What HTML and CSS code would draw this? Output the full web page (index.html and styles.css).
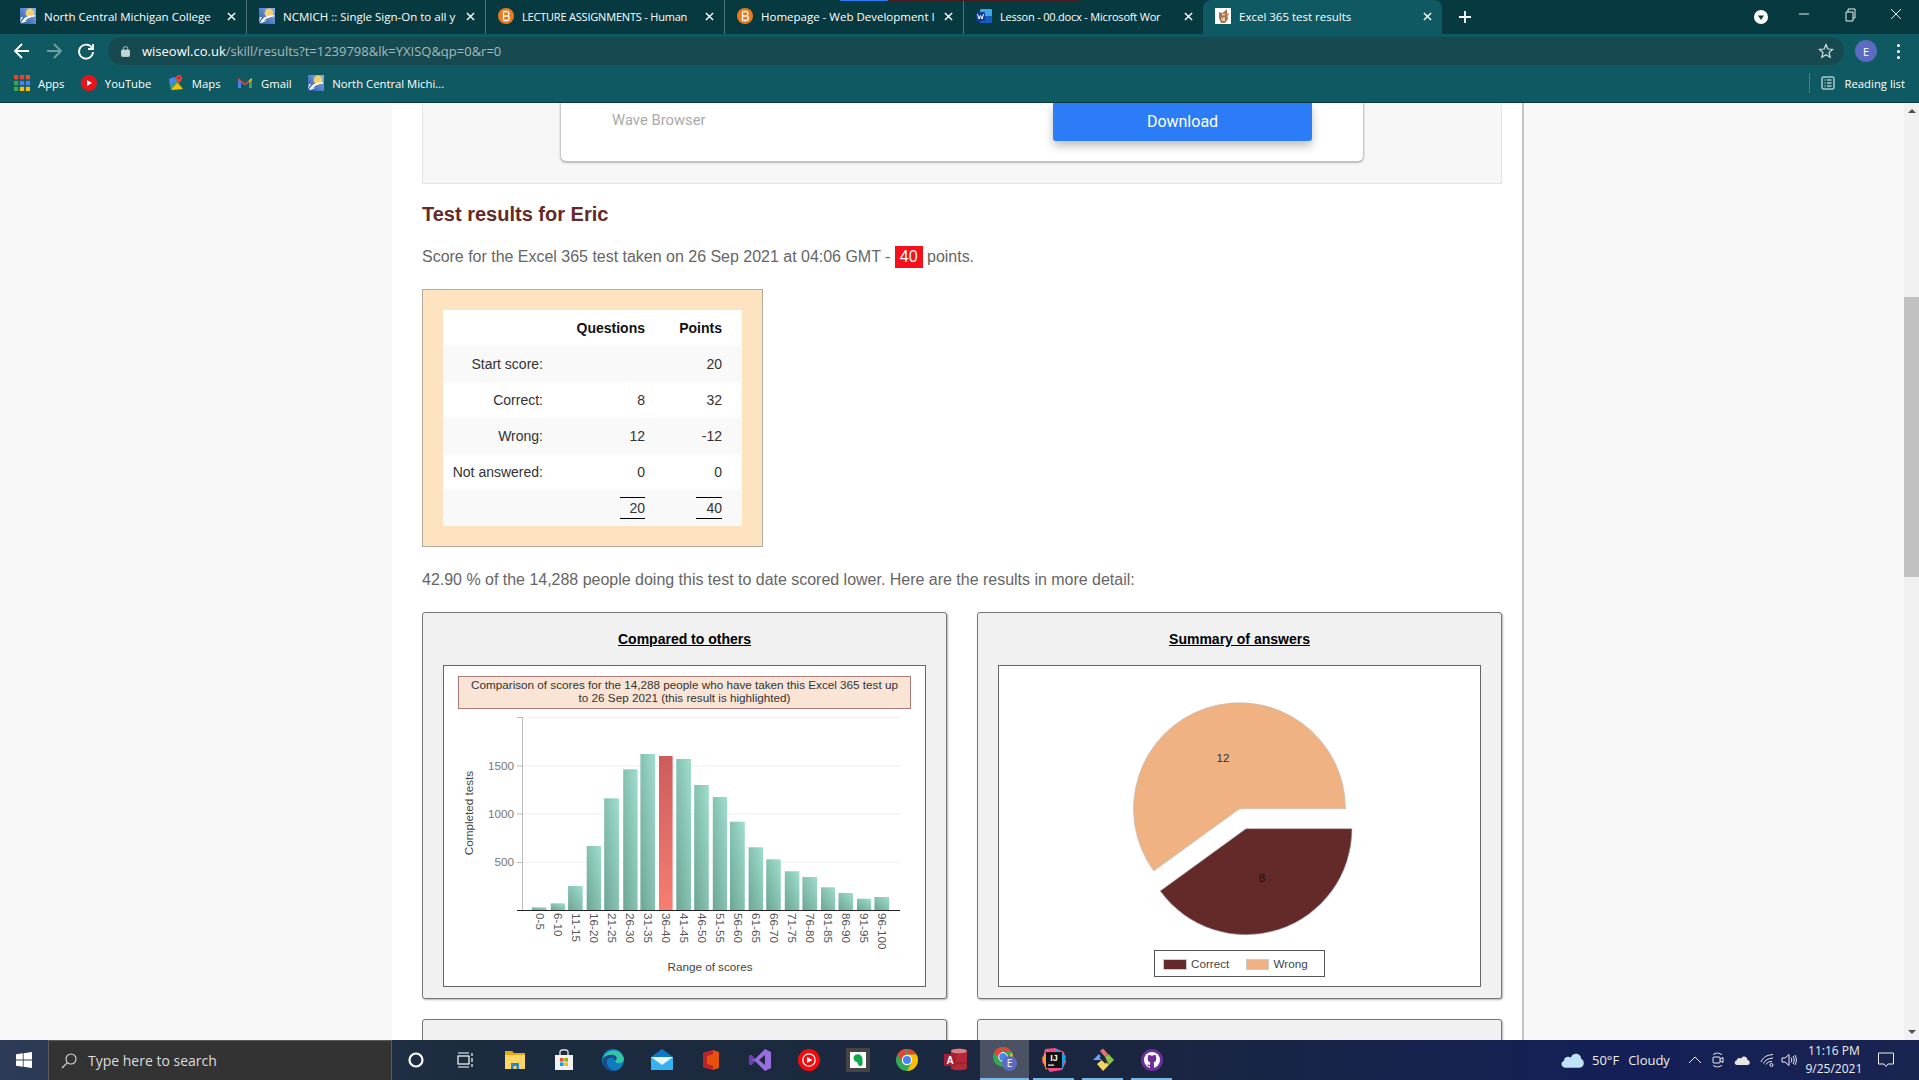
FILE: index.html
```html
<!DOCTYPE html>
<html lang="en">
<head>
    <meta charset="UTF-8">
    <meta name="viewport" content="width=device-width, initial-scale=1.0">
    <title>Excel 365 test results</title>
    <link rel="stylesheet" href="styles.css">
</head>
<body>
    <svg class="icon-defs" width="0" height="0">
        <defs>
            <linearGradient id="barGreen" x1="1" y1="0" x2="0" y2="1">
                <stop offset="0" stop-color="#a0decf"/>
                <stop offset="1" stop-color="#6ca595"/>
            </linearGradient>
            <linearGradient id="barRed" x1="0" y1="0" x2="0" y2="1">
                <stop offset="0" stop-color="#cd5c5c"/>
                <stop offset="1" stop-color="#f67e72"/>
            </linearGradient>
            <linearGradient id="ncBlue" x1="1" y1="0" x2="0" y2="1">
                <stop offset="0" stop-color="#8fb4e4"/>
                <stop offset="1" stop-color="#2456ad"/>
            </linearGradient>
            <symbol id="ncLogo" viewBox="0 0 16 16">
                <rect width="16" height="16" fill="url(#ncBlue)"/>
                <circle cx="10" cy="5" r="4.4" fill="#f8cf6e"/>
                <path d="M1 15 C3 10 7 7.5 15 7 V8.5 C10 9 7 10.5 5 13 L8 12.5 C5 14 3 15 1 15 Z" fill="#fff"/>
                <path d="M0 14 L3 9 L1 9 Z" fill="#fff"/>
            </symbol>
            <symbol id="bongo" viewBox="0 0 16 16">
                <circle cx="8" cy="8" r="8" fill="#e97c1f"/>
                <path d="M5.5 3.5 H9 C11.5 3.5 11.5 7.6 9.4 7.9 C12 8.2 12 12.5 9 12.5 H5.5 M5.5 3.5 V12.5 M6 8 H9" fill="none" stroke="#fff" stroke-width="1.3"/>
            </symbol>
        </defs>
    </svg>

    <div class="browser-top">
        <div class="load-line"></div>
        <div class="tab-strip">
            <div class="tab">
                <svg class="favicon"><use href="#ncLogo"/></svg>
                <span class="tab-title">North Central Michigan College</span>
                <svg class="tab-close" viewBox="0 0 10 10"><path d="M1 1 L9 9 M9 1 L1 9"/></svg>
            </div>
            <div class="tab">
                <svg class="favicon"><use href="#ncLogo"/></svg>
                <span class="tab-title">NCMICH :: Single Sign-On to all y</span>
                <svg class="tab-close" viewBox="0 0 10 10"><path d="M1 1 L9 9 M9 1 L1 9"/></svg>
            </div>
            <div class="tab">
                <svg class="favicon"><use href="#bongo"/></svg>
                <span class="tab-title tab-title-small">LECTURE ASSIGNMENTS - Human</span>
                <svg class="tab-close" viewBox="0 0 10 10"><path d="M1 1 L9 9 M9 1 L1 9"/></svg>
            </div>
            <div class="tab">
                <svg class="favicon"><use href="#bongo"/></svg>
                <span class="tab-title">Homepage - Web Development I</span>
                <svg class="tab-close" viewBox="0 0 10 10"><path d="M1 1 L9 9 M9 1 L1 9"/></svg>
            </div>
            <div class="tab tab-last">
                <svg class="favicon" viewBox="0 0 16 16">
                    <rect x="4" y="1" width="12" height="14" rx="1" fill="#41a5ee"/>
                    <rect x="4" y="8" width="12" height="7" fill="#185abd"/>
                    <rect x="0" y="4" width="9" height="9" rx="1" fill="#103f91"/>
                    <path d="M1.5 6 L3 11 L4.5 7.5 L6 11 L7.5 6" fill="none" stroke="#fff" stroke-width="1"/>
                </svg>
                <span class="tab-title tab-title-small">Lesson - 00.docx - Microsoft Wor</span>
                <svg class="tab-close" viewBox="0 0 10 10"><path d="M1 1 L9 9 M9 1 L1 9"/></svg>
            </div>
            <div class="tab tab-active">
                <svg class="favicon" viewBox="0 0 16 16">
                    <rect width="16" height="16" fill="#fff"/>
                    <path d="M4 4 L7 5 L10 3 L12 1 L12 6 L13 11 L10 15 L6 15 L4 10 Z" fill="#a5734f"/>
                    <path d="M7 5.5 H10 V7.5 H7 Z M6 10 L10 9 L10 13 L7 13 Z" fill="#e2c7a5"/>
                    <path d="M10 6 L14 5 L13 8 Z" fill="#d9803a"/>
                </svg>
                <span class="tab-title">Excel 365 test results</span>
                <svg class="tab-close" viewBox="0 0 10 10"><path d="M1 1 L9 9 M9 1 L1 9"/></svg>
            </div>
            <svg class="new-tab" viewBox="0 0 12 12"><path d="M6 0 V12 M0 6 H12"/></svg>
            <div class="window-controls">
                <svg class="tab-search" viewBox="0 0 14 14"><circle cx="7" cy="7" r="7" fill="#fff"/><path d="M4 5.5 H10 L7 10 Z" fill="#063a40"/></svg>
                <svg class="win-btn" viewBox="0 0 46 34"><path d="M18 14 H28"/></svg>
                <svg class="win-btn" viewBox="0 0 46 34"><path d="M19 12 H26 V21 H19 Z M21 12 V9 H28 V18 H26"/></svg>
                <svg class="win-btn" viewBox="0 0 46 34"><path d="M18 9 L28 19 M28 9 L18 19"/></svg>
            </div>
        </div>

        <div class="toolbar">
            <svg class="nav-btn" viewBox="0 0 32 32"><path d="M23 16 H10 M16 9 L9 16 L16 23"/></svg>
            <svg class="nav-btn nav-off" viewBox="0 0 32 32"><path d="M9 16 H22 M16 9 L23 16 L16 23"/></svg>
            <svg class="nav-btn" viewBox="0 0 32 32"><path d="M22 13 A7 7 0 1 0 23 17 M23 9 V14 H18"/></svg>
            <div class="url-bar">
                <svg class="lock" viewBox="0 0 10 12"><rect x="0.5" y="5" width="9" height="7" rx="1"/><path d="M2.5 5 V3.5 A2.5 2.5 0 0 1 7.5 3.5 V5" fill="none"/></svg>
                <span class="url-text"><span class="url-host">wiseowl.co.uk</span>/skill/results?t=1239798&amp;lk=YXISQ&amp;qp=0&amp;r=0</span>
                <svg class="star" viewBox="0 0 16 16"><path d="M8 1.5 L9.9 6 L14.7 6.4 L11 9.5 L12.2 14.2 L8 11.7 L3.8 14.2 L5 9.5 L1.3 6.4 L6.1 6 Z"/></svg>
            </div>
            <div class="avatar">E</div>
            <div class="menu-dots"><i></i><i></i><i></i></div>
        </div>

        <div class="bookmarks">
            <a class="bookmark">
                <svg class="bm-icon" viewBox="0 0 15 15">
                    <rect width="4" height="4" fill="#ea4335"/>
                    <rect x="5.5" width="4" height="4" fill="#ea4335"/>
                    <rect x="11" width="4" height="4" fill="#e8502e"/>
                    <rect y="5.5" width="4" height="4" fill="#34a853"/>
                    <rect x="5.5" y="5.5" width="4" height="4" fill="#4285f4"/>
                    <rect x="11" y="5.5" width="4" height="4" fill="#4285f4"/>
                    <rect y="11" width="4" height="4" fill="#34a853"/>
                    <rect x="5.5" y="11" width="4" height="4" fill="#fbbc05"/>
                    <rect x="11" y="11" width="4" height="4" fill="#fbbc05"/>
                </svg>Apps</a>
            <a class="bookmark">
                <svg class="bm-icon" viewBox="0 0 16 16"><circle cx="8" cy="8" r="8" fill="#e8141c"/><path d="M6 5 L11 8 L6 11 Z" fill="#fff"/></svg>YouTube</a>
            <a class="bookmark">
                <svg class="bm-icon" viewBox="0 0 16 16">
                    <path d="M1 4 L7 2 L15 14 L3 15 Z" fill="#34a853"/>
                    <path d="M3 15 L9 8 L15 14 Z" fill="#fbbc05"/>
                    <path d="M1 4 L7 2 L9 6 L2 11 Z" fill="#4285f4"/>
                    <path d="M11 0 C8 0 7.5 3 8.5 5 L11 9 L13.5 5 C14.5 3 14 0 11 0 Z" fill="#ea4335"/>
                    <circle cx="11" cy="3" r="1" fill="#8c1c13"/>
                </svg>Maps</a>
            <a class="bookmark">
                <svg class="bm-icon" viewBox="0 0 16 16">
                    <path d="M1 3 L8 8.5 L15 3 V13 H12 V7.5 L8 10.5 L4 7.5 V13 H1 Z" fill="#ea4335"/>
                    <path d="M1 5 V13 H4 V7.5 Z" fill="#4285f4"/>
                    <path d="M15 5 V13 H12 V7.5 Z" fill="#34a853"/>
                    <path d="M12 5 L15 3 V5 L12 7.5 Z" fill="#fbbc05"/>
                </svg>Gmail</a>
            <a class="bookmark">
                <svg class="bm-icon"><use href="#ncLogo"/></svg>North Central Michi...</a>
            <div class="reading-list">
                <svg class="bm-icon" viewBox="0 0 16 16"><rect x="2" y="2" width="12" height="12" rx="1"/><path d="M4.5 5 H5.5 M7 5 H11.5 M4.5 8 H5.5 M7 8 H11.5 M4.5 11 H5.5 M7 11 H11.5"/></svg>
                Reading list
            </div>
        </div>
    </div>

    <main class="viewport">
        <div class="gutter"></div>
        <div class="content">
            <div class="ad-box">
                <div class="ad-card">
                    <span class="ad-name">Wave Browser</span>
                    <a class="ad-button">Download</a>
                </div>
            </div>

            <h2 class="results-title">Test results for Eric</h2>
            <p class="score-line">Score for the Excel 365 test taken on 26 Sep 2021 at 04:06 GMT - <span class="score-badge">40</span> points.</p>

            <div class="score-box">
                <table class="score-table">
                    <tr><th></th><th>Questions</th><th>Points</th></tr>
                    <tr><td>Start score:</td><td></td><td>20</td></tr>
                    <tr><td>Correct:</td><td>8</td><td>32</td></tr>
                    <tr><td>Wrong:</td><td>12</td><td>-12</td></tr>
                    <tr><td>Not answered:</td><td>0</td><td>0</td></tr>
                    <tr><td></td><td><span class="total">20</span></td><td><span class="total total-wide">40</span></td></tr>
                </table>
            </div>

            <p class="compare-line">42.90 % of the 14,288 people doing this test to date scored lower. Here are the results in more detail:</p>

            <div class="panels">
                <section class="panel">
                    <h3 class="panel-title">Compared to others</h3>
                    <div class="chart-box">
                        <svg class="chart" viewBox="444 666 481 320">
                            <rect class="caption-box" x="458.5" y="676.5" width="452" height="32"/>
                            <text class="caption" x="684.5" y="688.5">Comparison of scores for the 14,288 people who have taken this Excel 365 test up</text>
                            <text class="caption" x="684.5" y="702">to 26 Sep 2021 (this result is highlighted)</text>

                            <path class="grid" d="M522 717.5 H900 M522 766 H900 M522 814 H900 M522 862.5 H900"/>
                            <path class="axis-y" d="M522.5 717 V910 M517 717.5 H522 M517 766 H522 M517 814 H522 M517 862.5 H522"/>
                            <text class="y-label" x="514" y="770">1500</text>
                            <text class="y-label" x="514" y="818">1000</text>
                            <text class="y-label" x="514" y="866">500</text>
                            <text class="axis-title" transform="rotate(-90 473 813)" x="473" y="813">Completed tests</text>

                            <g class="bars">
                                <rect x="531.9" y="907.3" width="14.6" height="2.7"/>
                                <rect x="550.8" y="903.3" width="14.4" height="6.7"/>
                                <rect x="568.1" y="886" width="14.6" height="24"/>
                                <rect x="586.7" y="846" width="14.4" height="64"/>
                                <rect x="604.2" y="798.3" width="14.8" height="111.7"/>
                                <rect x="623.2" y="769.3" width="14.4" height="140.7"/>
                                <rect x="640.4" y="754" width="14.6" height="156"/>
                                <rect class="bar-hit" x="659" y="756" width="13.6" height="154"/>
                                <rect x="676.3" y="759" width="14.8" height="151"/>
                                <rect x="694.2" y="785" width="14.6" height="125"/>
                                <rect x="712.8" y="797" width="14.2" height="113"/>
                                <rect x="730" y="821.7" width="14.8" height="88.3"/>
                                <rect x="748.6" y="847.3" width="14.6" height="62.7"/>
                                <rect x="766.2" y="859.3" width="14.6" height="50.7"/>
                                <rect x="784.8" y="871.3" width="14.6" height="38.7"/>
                                <rect x="802.4" y="877" width="14.8" height="33"/>
                                <rect x="821" y="887.3" width="14.2" height="22.7"/>
                                <rect x="838.5" y="893" width="14.6" height="17"/>
                                <rect x="857" y="898.7" width="14.2" height="11.3"/>
                                <rect x="874.4" y="897" width="14.8" height="13"/>
                            </g>
                            <path class="axis-x" d="M517 910.5 H900"/>

                            <g class="x-labels">
                                <text transform="rotate(90 535.5 913)" x="535.5" y="913">0-5</text>
                                <text transform="rotate(90 554 913)" x="554" y="913">6-10</text>
                                <text transform="rotate(90 572 913)" x="572" y="913">11-15</text>
                                <text transform="rotate(90 590 913)" x="590" y="913">16-20</text>
                                <text transform="rotate(90 608 913)" x="608" y="913">21-25</text>
                                <text transform="rotate(90 626 913)" x="626" y="913">26-30</text>
                                <text transform="rotate(90 644 913)" x="644" y="913">31-35</text>
                                <text transform="rotate(90 662 913)" x="662" y="913">36-40</text>
                                <text transform="rotate(90 680 913)" x="680" y="913">41-45</text>
                                <text transform="rotate(90 698 913)" x="698" y="913">46-50</text>
                                <text transform="rotate(90 716 913)" x="716" y="913">51-55</text>
                                <text transform="rotate(90 734 913)" x="734" y="913">56-60</text>
                                <text transform="rotate(90 752 913)" x="752" y="913">61-65</text>
                                <text transform="rotate(90 770 913)" x="770" y="913">66-70</text>
                                <text transform="rotate(90 788 913)" x="788" y="913">71-75</text>
                                <text transform="rotate(90 806 913)" x="806" y="913">76-80</text>
                                <text transform="rotate(90 824 913)" x="824" y="913">81-85</text>
                                <text transform="rotate(90 842 913)" x="842" y="913">86-90</text>
                                <text transform="rotate(90 860 913)" x="860" y="913">91-95</text>
                                <text transform="rotate(90 878 913)" x="878" y="913">96-100</text>
                            </g>
                            <text class="axis-title" x="710" y="971">Range of scores</text>
                        </svg>
                    </div>
                </section>

                <section class="panel">
                    <h3 class="panel-title">Summary of answers</h3>
                    <div class="chart-box">
                        <svg class="chart" viewBox="999 666 481 320">
                            <path class="slice-wrong" d="M1239.5 808.7 H1345.5 A106 106 0 1 0 1153.7 871 Z"/>
                            <path class="slice-correct" d="M1246 828.7 H1352 A106 106 0 0 1 1160.2 891 Z"/>
                            <text class="pie-label" x="1223" y="762">12</text>
                            <text class="pie-label pie-label-dark" x="1262" y="882">8</text>
                            <rect class="legend-box" x="1154.5" y="950.5" width="170" height="26"/>
                            <rect class="swatch-correct" x="1163.5" y="959.5" width="23" height="10"/>
                            <text class="legend-text" x="1191" y="967.5">Correct</text>
                            <rect class="swatch-wrong" x="1246.5" y="959.5" width="22" height="10"/>
                            <text class="legend-text" x="1273.5" y="967.5">Wrong</text>
                        </svg>
                    </div>
                </section>

                <section class="panel panel-next"></section>
                <section class="panel panel-next"></section>
            </div>
        </div>
        <div class="side"></div>
        <div class="scrollbar">
            <span class="arrow-up"></span>
            <div class="scroll-track"><div class="scroll-thumb"></div></div>
            <span class="arrow-down"></span>
        </div>
    </main>

    <footer class="taskbar">
        <div class="start">
            <svg class="start-logo" viewBox="0 0 16 16"><path d="M0 2.3 L6.8 1.3 V7.6 H0 Z M7.6 1.2 L16 0 V7.6 H7.6 Z M0 8.4 H6.8 V14.7 L0 13.7 Z M7.6 8.4 H16 V16 L7.6 14.8 Z"/></svg>
        </div>
        <div class="search-box">
            <svg class="search-icon" viewBox="0 0 16 16"><circle cx="10" cy="6" r="5"/><path d="M6.4 9.6 L1 15"/></svg>
            <span>Type here to search</span>
        </div>

        <div class="task-icons">
            <div class="task"><svg viewBox="0 0 24 24"><circle cx="12" cy="12" r="6.5" fill="none" stroke="#fff" stroke-width="2.2"/></svg></div>
            <div class="task task-view"><svg viewBox="0 0 24 24" fill="none" stroke="#fff" stroke-width="1.2"><rect x="5" y="8" width="11" height="8"/><path d="M5 5 H16 M5 19 H16 M19 5 V8 M19 10 V14 M19 16 V19"/></svg></div>
            <div class="task"><svg viewBox="0 0 24 24"><path d="M2 3 H9 L11 5 H22 V21 H2 Z" fill="#e6a817"/><path d="M2 7 H22 V21 H2 Z" fill="#fcd667"/><path d="M8 21 V15 H16 V21 H13.5 V18 H10.5 V21 Z" fill="#2d86c6"/></svg></div>
            <div class="task"><svg viewBox="0 0 24 24"><path d="M3 7 H21 V22 H3 Z" fill="#f2f2f2"/><path d="M8 7 V4 C8 1 16 1 16 4 V7" fill="none" stroke="#ddd" stroke-width="1.4"/><rect x="8" y="10" width="3.6" height="3.6" fill="#f25022"/><rect x="12.4" y="10" width="3.6" height="3.6" fill="#7fba00"/><rect x="8" y="14.4" width="3.6" height="3.6" fill="#00a4ef"/><rect x="12.4" y="14.4" width="3.6" height="3.6" fill="#ffb900"/></svg></div>
            <div class="task"><svg viewBox="0 0 24 24"><circle cx="12" cy="12" r="11" fill="#0c7bc0"/><path d="M2 12 C3 3 20 0 23 11 C23 16 15 17 14 13 C14 9 8 8 6 13 C5 18 10 23 15 22.6 C8 25 1 20 2 12 Z" fill="#1b4a86"/><path d="M2 10 C5 1 20 -1 23 11 C23 16 15 17 14 13 C20 9 10 3 2 10 Z" fill="#34c5a6"/></svg></div>
            <div class="task"><svg viewBox="0 0 24 24"><path d="M1 9 L12 1 L23 9 V22 H1 Z" fill="#0f78c8"/><path d="M1 9 H23 V22 H1 Z" fill="#36b2f0"/><path d="M1 9 H23 L12 17 Z" fill="#e8f6fd"/></svg></div>
            <div class="task"><svg viewBox="0 0 24 24"><path d="M14 2 L20 4 V20 L14 22 L4 19 V5 Z" fill="#e6500f"/><path d="M4 5 L14 2 V6 L8 8 V16 L14 18 V22 L4 19 Z" fill="#b7252b"/></svg></div>
            <div class="task"><svg viewBox="0 0 24 24"><path d="M17 1 L23 4 V20 L17 23 L7 13 L3 17 L1 16 V8 L3 7 L7 11 Z" fill="#9a6ee0"/><path d="M17 7 V17 L11 12 Z" fill="#1e2a3c"/><path d="M1 8 L3 7 L7 11 L4 12 L7 13 L3 17 L1 16 Z" fill="#6b3fb8"/></svg></div>
            <div class="task"><svg viewBox="0 0 24 24"><circle cx="12" cy="12" r="11" fill="#f40b0b"/><circle cx="12" cy="12" r="6.2" fill="none" stroke="#fff" stroke-width="1.3"/><path d="M10 9 L15.5 12 L10 15 Z" fill="#fff"/></svg></div>
            <div class="task"><svg viewBox="0 0 24 24"><rect width="24" height="24" fill="#444"/><rect x="4" y="4" width="16" height="16" fill="#fff"/><path d="M9 7 C13 5 17 7 16.5 13 C16.5 16 17 18 14 18 C12 18 12 15 11 14 C9 14 7.5 12 7.5 9 Z" fill="#10a84a"/></svg></div>
            <div class="task"><svg viewBox="0 0 24 24"><circle cx="12" cy="12" r="11" fill="#34a853"/><path d="M12 1 A11 11 0 0 1 21.5 6.5 H12 Z M12 1 A11 11 0 0 0 2.5 6.5 L7 14 Z" fill="#ea4335"/><path d="M21.5 6.5 A11 11 0 0 1 12 23 L17 14 L12 6.5 Z" fill="#fbbc05"/><circle cx="12" cy="12" r="5.2" fill="#fff"/><circle cx="12" cy="12" r="4" fill="#4285f4"/></svg></div>
            <div class="task"><svg viewBox="0 0 24 24"><path d="M7 3 C7 0 23 0 23 3 V20 C23 23 7 23 7 20 Z" fill="#b3293a"/><path d="M7 3 C7 0 23 0 23 3 C23 6 7 6 7 3 Z" fill="#d9828c"/><path d="M7 15 H23" stroke="#8e1d2b"/><rect x="0" y="6" width="12" height="12" fill="#a41e34"/><text class="access-a" x="6" y="16">A</text></svg></div>
            <div class="task task-active"><svg viewBox="0 0 24 24"><circle cx="10" cy="10" r="10" fill="#34a853"/><path d="M10 0 A10 10 0 0 1 18.7 5 H10 Z M10 0 A10 10 0 0 0 1.3 5 L5.5 12 Z" fill="#ea4335"/><path d="M18.7 5 A10 10 0 0 1 19 14 H14 Z" fill="#fbbc05"/><circle cx="10" cy="10" r="4.4" fill="#4285f4" stroke="#fff" stroke-width="1"/><circle cx="16.5" cy="16.5" r="7.5" fill="#5c6bc0"/><text class="chrome-e" x="16.5" y="20">E</text></svg></div>
            <div class="task task-open"><svg viewBox="0 0 24 24"><path d="M3 1 L13 0 L22 4 L24 14 L20 22 L8 24 L0 14 Z" fill="#ef4a85"/><path d="M13 0 L24 8 L20 22 L14 14 Z" fill="#10a7e6"/><path d="M0 10 L6 2 L10 12 L4 22 Z" fill="#fd9a2d"/><rect x="4" y="4" width="16" height="16" fill="#111"/><text class="ij-mark" x="12" y="12.6">IJ</text><rect x="6" y="16.5" width="6" height="1.2" fill="#fff"/></svg></div>
            <div class="task task-open"><svg viewBox="0 0 24 24"><path d="M12 12 L2.5 12 L8 6 Z M8 6 L12 12 L2 12 Z" fill="#6ba7f7"/><path d="M9 3 L12 0.5 L17 6 L14 9 Z" fill="#ee6c72"/><path d="M14 9 L17.5 6 L23 12 L18 17 Z" fill="#8bc34a"/><path d="M6 16 L12 11 L18 17 L12 23 Z" fill="#f6d35c"/><path d="M9 9 L15 15" stroke="#1e2a3c" stroke-width="2"/></svg></div>
            <div class="task task-open"><svg viewBox="0 0 24 24"><circle cx="12" cy="12" r="11" fill="#6e2e9a"/><circle cx="12" cy="12" r="8" fill="#fff"/><path d="M8 9 L8.4 6.5 L10.5 7.5 H13.5 L15.6 6.5 L16 9 C17 11.5 15.5 14 13.5 14.4 C14 15 14 15.5 14 20 H10 V18 C8 18.5 7.5 17 7 16.5 C8 16.5 9 17 10 17 C10 15.5 10 15 10.5 14.4 C8.5 14 7 11.5 8 9 Z" fill="#6e2e9a"/></svg></div>
        </div>

        <div class="tray">
            <svg class="tray-cloud" viewBox="0 0 22 16"><path d="M5 15 C1 15 0 10 3.5 9 C3.5 5 8 4 10 6 C11 1 19 1 19.5 7 C23 8 22.5 15 18 15 Z"/></svg>
            <span class="tray-temp">50°F</span>
            <span class="tray-weather">Cloudy</span>
            <svg class="tray-icon tray-chevron" viewBox="0 0 14 14"><path d="M1 10 L7 4 L13 10"/></svg>
            <svg class="tray-icon tray-meet" viewBox="0 0 14 16"><rect x="2" y="5" width="7" height="6" rx="1"/><path d="M9 7 L12 5.5 V10.5 L9 9 M2 3 C4 0.5 9 0.5 11 3 M2 13 C4 15.5 9 15.5 11 13"/></svg>
            <svg class="tray-onedrive" viewBox="0 0 16 10"><path d="M3 10 C0 10 0 6 2.6 5.6 C3 3 6 2.6 7 3.6 C9 0 13.5 1.5 13.5 5 C16.5 5.5 16.5 10 13.5 10 Z"/></svg>
            <svg class="tray-icon tray-wifi" viewBox="0 0 14 14"><path d="M1 9 C3 4 7 2 13 1.5 M3.5 10.5 C5 7 8 5.5 13 5 M6 11.5 C7 9.5 9 8.5 12 8.5"/><circle cx="11.5" cy="12" r="1.5"/></svg>
            <svg class="tray-icon tray-speaker" viewBox="0 0 16 14"><path d="M1 5 H4 L8 1.5 V12.5 L4 9 H1 Z M10 4.5 C11 6 11 8 10 9.5 M12 3 C13.6 5.5 13.6 8.5 12 11 M14 2 C15.8 5 15.8 9 14 12"/></svg>
            <div class="clock"><span>11:16 PM</span><span>9/25/2021</span></div>
            <svg class="tray-icon tray-notify" viewBox="0 0 18 16"><path d="M1.5 1 H16.5 V12 H11 L9 14.5 L7 12 H1.5 Z"/></svg>
        </div>
    </footer>
</body>
</html>
```

FILE: styles.css
```css
* {
    box-sizing: border-box;
}

html, body {
    margin: 0;
    height: 100%;
    overflow: hidden;
}

body {
    display: flex;
    flex-direction: column;
    font-family: "Liberation Sans", Arial, sans-serif;
    background: #f8f8f8;
    color: #333;
}

.icon-defs {
    position: absolute;
}

/* browser chrome */
.browser-top {
    position: relative;
    flex: none;
    height: 103px;
    font-family: "Open Sans", sans-serif;
    color: #fff;
    background: #0f5a62;
    border-bottom: 1px solid #063a40;
}

.load-line {
    position: absolute;
    top: 0;
    left: 840px;
    width: 240px;
    height: 1px;
    background: linear-gradient(to right, #2b7cf6 20%, #4a1c1c 20%);
    z-index: 2;
}

.tab-strip {
    display: flex;
    align-items: center;
    height: 34px;
    padding-left: 8px;
    background: #063a40;
}

.tab {
    display: flex;
    align-items: center;
    width: 239px;
    height: 34px;
    padding: 0 10px 2px 12px;
    font-size: 11.5px;
    border-right: 1px solid #4b7479;
}

.tab-last {
    border-right: none;
}

.tab-active {
    background: #0f5a62;
    border-radius: 8px 8px 0 0;
    border-right: none;
}

.favicon {
    flex: none;
    width: 16px;
    height: 16px;
}

.tab-title {
    flex: 1;
    margin-left: 8px;
    white-space: nowrap;
    overflow: hidden;
}

/* the long titles are squeezed to fit and keep the word they break on */
.tab-title-small {
    font-size: 11px;
    letter-spacing: -0.2px;
}

.tab-close {
    flex: none;
    width: 9px;
    height: 9px;
    margin-left: 10px;
    stroke: #fff;
    stroke-width: 1.6;
    fill: none;
}

.new-tab {
    width: 12px;
    height: 12px;
    margin-left: 17px;
    stroke: #fff;
    stroke-width: 1.8;
    fill: none;
}

.window-controls {
    display: flex;
    align-items: center;
    margin-left: auto;
}

.tab-search {
    width: 14px;
    height: 14px;
    margin-right: 13px;
}

.win-btn {
    width: 46px;
    height: 34px;
    stroke: #e8eeee;
    stroke-width: 1;
    fill: none;
}

.toolbar {
    display: flex;
    align-items: center;
    height: 34px;
    padding-left: 6px;
}

.nav-btn {
    flex: none;
    width: 32px;
    height: 32px;
    stroke: #fff;
    stroke-width: 1.8;
    fill: none;
}

.nav-off {
    stroke: #74a0a4;
}

.url-bar {
    display: flex;
    align-items: center;
    flex: 1;
    height: 28px;
    margin-left: 6px;
    padding: 0 10px 0 13px;
    background: #174a50;
    border-radius: 14px;
}

.lock {
    width: 9px;
    height: 12px;
    fill: #c5d4d6;
    stroke: #c5d4d6;
}

.url-text {
    margin-left: 12px;
    font-size: 13px;
    color: #a3bcbf;
}

.url-host {
    color: #fff;
}

.star {
    width: 16px;
    height: 16px;
    margin-left: auto;
    stroke: #d5e0e1;
    stroke-width: 1.2;
    fill: none;
}

.avatar {
    display: flex;
    align-items: center;
    justify-content: center;
    width: 22px;
    height: 22px;
    margin: 0 12px 0 11px;
    font-size: 11px;
    background: #5c6bc0;
    border-radius: 50%;
}

.menu-dots {
    display: flex;
    flex-direction: column;
    gap: 3px;
    width: 18px;
    align-items: center;
    margin-right: 12px;
}

.menu-dots i {
    width: 3px;
    height: 3px;
    background: #fff;
    border-radius: 50%;
}

.bookmarks {
    display: flex;
    align-items: center;
    height: 34px;
    padding: 0 0 4px 14px;
    font-size: 11.3px;
}

.bookmark {
    display: flex;
    align-items: center;
    gap: 8px;
    margin-right: 16.5px;
    white-space: nowrap;
}

.bm-icon {
    flex: none;
    width: 16px;
    height: 16px;
}

.reading-list {
    display: flex;
    align-items: center;
    gap: 9px;
    height: 20px;
    margin-left: auto;
    padding: 0 14px 0 10px;
    border-left: 1px solid #4b7f85;
}

.reading-list .bm-icon {
    fill: none;
    stroke: #fff;
}

/* page under the chrome */
.viewport {
    flex: 1;
    display: flex;
    min-height: 0;
    overflow: hidden;
}

.gutter {
    flex: none;
    width: 392px;
}

.content {
    flex: none;
    width: 1132px;
    padding-left: 30px;
    padding-right: 20px;
    background: #fff;
    border-right: 2px solid #c4c4c4;
    overflow: hidden;
}

.side {
    flex: 1;
}

.scrollbar {
    flex: none;
    display: flex;
    flex-direction: column;
    align-items: center;
    width: 15px;
    background: #f1f1f1;
}

.arrow-up, .arrow-down {
    flex: none;
    width: 0;
    height: 0;
    margin: 6px 0;
    border-left: 4px solid transparent;
    border-right: 4px solid transparent;
}

.arrow-up {
    border-bottom: 4px solid #505050;
}

.arrow-down {
    border-top: 4px solid #505050;
}

.scroll-track {
    flex: 1;
    width: 100%;
}

.scroll-thumb {
    width: 100%;
    height: 280px;
    margin-top: 178px;
    background: #c1c1c1;
}

/* ad at the top of the page */
.ad-box {
    height: 81px;
    padding-left: 138px;
    background: #f7f7f7;
    border: 1px solid #e4e4e4;
    border-top: none;
}

.ad-card {
    display: flex;
    width: 802px;
    height: 58px;
    padding-left: 51px;
    background: #fff;
    border-radius: 0 0 5px 5px;
    box-shadow: 0 1px 2px 1px rgba(0, 0, 0, 0.25);
}

.ad-name {
    margin-top: 8px;
    font-family: Roboto, sans-serif;
    font-size: 14.8px;
    color: #aaa;
}

.ad-button {
    display: flex;
    align-items: center;
    justify-content: center;
    width: 259px;
    height: 38px;
    margin-left: auto;
    margin-right: 51px;
    padding-bottom: 2px;
    font-family: Roboto, sans-serif;
    font-size: 16px;
    color: #fff;
    background: #2b7cf6;
    border-radius: 0 0 3px 3px;
    box-shadow: 0 5px 10px rgba(0, 0, 0, 0.25);
}

.results-title {
    margin: 18px 0 0;
    font-size: 20px;
    line-height: 24px;
    color: #642a2a;
}

.score-line {
    display: flex;
    align-items: center;
    white-space: pre;
    margin: 20px 0 0;
    font-size: 16px;
    line-height: 22px;
    letter-spacing: -0.015px;
    color: #666;
}

.score-badge {
    padding: 0 5px;
    color: #fff;
    background: #f5101a;
}

.score-box {
    width: 341px;
    height: 258px;
    margin-top: 21px;
    padding: 20px;
    background: #fde3c0;
    border: 1px solid #b3aaa0;
}

.score-table {
    width: 299px;
    table-layout: fixed;
    border-collapse: collapse;
    font-size: 14px;
    background: #fff;
}

.score-table tr {
    height: 36px;
}

.score-table tr:nth-child(even) td {
    background: #f9f9f9;
}

.score-table th, .score-table td {
    padding: 0 20px 0 0;
    text-align: right;
    color: #333;
}

.score-table th {
    color: #111;
}

.score-table tr > :first-child {
    width: 120px;
}

.score-table tr > :nth-child(2) {
    width: 102px;
}

.total {
    display: inline-block;
    width: 25px;
    line-height: 20px;
    border-top: 1px solid #000;
    border-bottom: 1px solid #000;
}

.total-wide {
    width: 26px;
}

.compare-line {
    margin: 22px 0 0;
    font-size: 16px;
    line-height: 22px;
    letter-spacing: -0.015px;
    color: #666;
}

.panels {
    display: grid;
    grid-template-columns: 525px 525px;
    column-gap: 30px;
    row-gap: 20px;
    margin-top: 21px;
}

.panel {
    height: 387px;
    padding: 0 20px;
    background: #f1f1f1;
    border: 1px solid #777;
    border-radius: 3px;
    box-shadow: 1px 1px 2px rgba(0, 0, 0, 0.3);
}

.panel-title {
    margin: 0;
    height: 52px;
    padding-top: 17px;
    font-size: 14px;
    line-height: 18px;
    text-align: center;
    text-decoration: underline;
    color: #000;
}

.chart-box {
    height: 322px;
    background: #fff;
    border: 1px solid #666;
}

.chart {
    display: block;
    width: 481px;
    height: 320px;
    font-family: "Liberation Sans", Arial, sans-serif;
    font-size: 11.7px;
}

.caption-box {
    fill: #f9e4d6;
    stroke: #a97a7a;
    stroke-width: 1;
}

.caption {
    text-anchor: middle;
    fill: #333;
}

.grid {
    stroke: #f3f3f3;
    stroke-width: 1.5;
    fill: none;
}

.axis-y {
    stroke: #bbb;
    stroke-width: 1;
    fill: none;
}

.axis-x {
    stroke: #222;
    stroke-width: 1;
}

.y-label {
    text-anchor: end;
    fill: #777;
}

.axis-title {
    text-anchor: middle;
    fill: #444;
}

.bars rect {
    fill: url(#barGreen);
}

.bars .bar-hit {
    fill: url(#barRed);
}

.x-labels text {
    fill: #555;
}

.slice-wrong {
    fill: #f0b283;
    stroke: #bbb;
    stroke-width: 0.6;
}

.slice-correct {
    fill: #642a2a;
    stroke: #aaa;
    stroke-width: 0.6;
}

.pie-label {
    text-anchor: middle;
    fill: #333;
}

.pie-label-dark {
    fill: #1c0d0d;
}

.legend-box {
    fill: #fff;
    stroke: #555;
}

.swatch-correct {
    fill: #642a2a;
    stroke: #ccc;
}

.swatch-wrong {
    fill: #f0b283;
    stroke: #ccc;
}

.legend-text {
    fill: #444;
}

/* windows taskbar */
.taskbar {
    flex: none;
    display: flex;
    align-items: center;
    height: 40px;
    font-family: "Open Sans", sans-serif;
    color: #fff;
    background: linear-gradient(to right, #2e3b56 0%, #1c2c3f 25%, #1a2640 60%, #141f58 85%, #1a2450 100%);
}

.start {
    display: flex;
    align-items: center;
    justify-content: center;
    width: 48px;
    height: 40px;
}

.start-logo {
    width: 16px;
    height: 16px;
    fill: #fff;
}

.search-box {
    display: flex;
    align-items: center;
    gap: 11px;
    width: 344px;
    height: 40px;
    padding-left: 12px;
    font-size: 14px;
    color: #ddd;
    background: #333;
    border: 1px solid #5c5c5c;
    border-width: 1px 1px 0;
}

.search-icon {
    width: 16px;
    height: 16px;
    fill: none;
    stroke: #ddd;
    stroke-width: 1.1;
}

.task-icons {
    display: flex;
}

.task {
    display: flex;
    align-items: center;
    justify-content: center;
    width: 49px;
    height: 40px;
}

.task:first-child {
    width: 48px;
}

.task-view {
    width: 50px;
}

.task svg {
    width: 24px;
    height: 24px;
}

.task-active {
    background: #4a5264;
    border-bottom: 2px solid #76b9ed;
}

.task-open {
    position: relative;
}

.task-open::after {
    content: "";
    position: absolute;
    left: 4px;
    right: 4px;
    bottom: 0;
    height: 2px;
    background: #76b9ed;
}

.access-a {
    font-family: "Liberation Sans", Arial, sans-serif;
    font-size: 10px;
    font-weight: bold;
    text-anchor: middle;
    fill: #fff;
}

.chrome-e {
    font-size: 10px;
    text-anchor: middle;
    fill: #fff;
}

.ij-mark {
    font-family: "Liberation Sans", Arial, sans-serif;
    font-size: 9px;
    font-weight: bold;
    text-anchor: middle;
    fill: #fff;
}

.tray {
    display: flex;
    align-items: center;
    flex: 1;
    min-width: 0;
    font-size: 13px;
    color: #eee;
}

.tray-cloud {
    width: 24px;
    height: 18px;
    margin-left: 384px;
    fill: #bfe3f8;
}

.tray-temp {
    margin-left: 8px;
}

.tray-weather {
    margin-left: 9px;
}

.tray-icon {
    flex: none;
    fill: none;
    stroke: #eee;
    stroke-width: 1;
}

.tray-chevron {
    width: 14px;
    height: 14px;
    margin-left: 18px;
}

.tray-meet {
    width: 14px;
    height: 16px;
    margin-left: 9px;
}

.tray-onedrive {
    width: 16px;
    height: 10px;
    margin-left: 9px;
    fill: #e6e6e6;
}

.tray-wifi {
    width: 14px;
    height: 14px;
    margin-left: 10px;
}

.tray-speaker {
    width: 16px;
    height: 14px;
    margin-left: 7px;
}

.clock {
    display: flex;
    flex-direction: column;
    align-items: center;
    width: 60px;
    margin-left: 7px;
    font-size: 12px;
    line-height: 18px;
}

.tray-notify {
    width: 18px;
    height: 16px;
    margin-left: 13px;
}
```
